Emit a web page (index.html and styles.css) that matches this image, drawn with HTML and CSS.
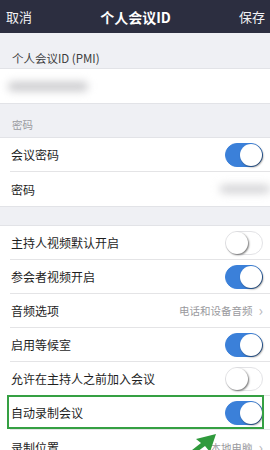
FILE: index.html
```html
<!DOCTYPE html>
<html>
<head>
<meta charset="utf-8">
<link rel="stylesheet" href="styles.css">
</head>
<body>
<div class="page">
  <div class="header">
    <span class="hbtn">取消</span>
    <span class="title">个人会议ID</span>
    <span class="hbtn">保存</span>
  </div>
  <div class="label-block">个人会议ID (PMI)</div>
  <div class="id-row"><div class="blur-id"></div></div>
  <div class="section-title">密码</div>
  <div class="group">
    <div class="row"><span class="txt">会议密码</span><span class="toggle on"><span class="knob"></span></span></div>
    <div class="row last"><span class="txt">密码</span><span class="blur-pw"></span></div>
  </div>
  <div class="gap"></div>
  <div class="group">
    <div class="row"><span class="txt">主持人视频默认开启</span><span class="toggle"><span class="knob"></span></span></div>
    <div class="row"><span class="txt">参会者视频开启</span><span class="toggle on"><span class="knob"></span></span></div>
    <div class="row"><span class="txt">音频选项</span><span class="val">电话和设备音频<span class="chev">›</span></span></div>
    <div class="row"><span class="txt">启用等候室</span><span class="toggle on"><span class="knob"></span></span></div>
    <div class="row"><span class="txt">允许在主持人之前加入会议</span><span class="toggle"><span class="knob"></span></span></div>
    <div class="row"><span class="txt">自动录制会议</span><span class="toggle on"><span class="knob"></span></span></div>
    <div class="row last"><span class="txt">录制位置</span><span class="val">本地电脑<span class="chev">›</span></span></div>
  </div>
  <div class="highlight"></div>
  <svg class="arrow" width="40" height="22" viewBox="0 0 40 22">
    <polygon points="34,2 14,7 19,11 5,22 12,22 23,14 28,20" fill="#2f9a3c"/>
  </svg>
</div>
</body>
</html>
```

FILE: styles.css
```css
html, body { margin: 0; padding: 0; }
body {
  font-family: "Noto Sans CJK SC", "Noto Sans", sans-serif;
  background: #eff0f4;
  width: 270px;
  height: 450px;
  overflow: hidden;
}
.page { position: relative; width: 270px; height: 450px; overflow: hidden; }
.header {
  height: 33px;
  background: #2c2e40;
  color: #fff;
  display: flex;
  align-items: center;
  justify-content: space-between;
  padding: 0 5px 0 6px;
  box-sizing: border-box;
}
.hbtn { font-size: 13px; color: #f2f2f5; }
.title { font-size: 14px; font-weight: bold; color: #fff; }
.label-block {
  height: 36px;
  display: flex;
  align-items: flex-end;
  padding: 0 0 2px 12px;
  box-sizing: border-box;
  font-size: 11.5px;
  color: #3c3c3c;
  border-bottom: 1px solid #e2e3e7;
}
.id-row {
  height: 34px;
  background: #fff;
  display: flex;
  align-items: center;
  padding-left: 8px;
  border-bottom: 1px solid #e2e3e7;
}
.blur-id {
  width: 80px;
  height: 9px;
  background: #c9c9cc;
  border-radius: 5px;
  filter: blur(4px);
}
.section-title {
  height: 34px;
  display: flex;
  align-items: flex-end;
  padding: 0 0 5px 12px;
  font-size: 10.5px;
  color: #9a9ba0;
  border-bottom: 1px solid #e2e3e7;
  box-sizing: border-box;
}
.group { background: #fff; border-bottom: 1px solid #e2e3e7; }
.row {
  height: 34px;
  display: flex;
  align-items: center;
  justify-content: space-between;
  margin-left: 10px;
  padding-right: 7px;
  border-bottom: 1px solid #e4e4e6;
  box-sizing: border-box;
}
.row.last { border-bottom: none; }
.txt { font-size: 12px; color: #1e1e1e; padding-left: 1px; }
.val { font-size: 10.5px; color: #9a9a9e; display: flex; align-items: center; }
.chev { font-size: 15px; color: #b8b8bc; margin-left: 6px; line-height: 1; margin-top: -2px; }
.gap { height: 18px; border-bottom: 1px solid #e2e3e7; }
.toggle {
  width: 38px;
  height: 24px;
  border-radius: 12px;
  background: #fff;
  border: 1px solid #e3e3e6;
  box-sizing: border-box;
  position: relative;
}
.toggle .knob {
  position: absolute;
  top: 0;
  left: 0;
  width: 22px;
  height: 22px;
  border-radius: 50%;
  background: #fff;
  box-shadow: 1px 1px 2px rgba(0,0,0,0.55);
}
.toggle.on { background: #3b80d9; border-color: #3b80d9; }
.toggle.on .knob { left: 14px; }
.blur-pw {
  width: 50px;
  height: 8px;
  background: #d0d0d3;
  border-radius: 4px;
  filter: blur(4px);
  margin-right: -7px;
}
.highlight {
  position: absolute;
  left: 7px;
  top: 395px;
  width: 257px;
  height: 34px;
  border: 2.5px solid #35a043;
  box-sizing: border-box;
}
.arrow { position: absolute; left: 182px; top: 432px; }
```
